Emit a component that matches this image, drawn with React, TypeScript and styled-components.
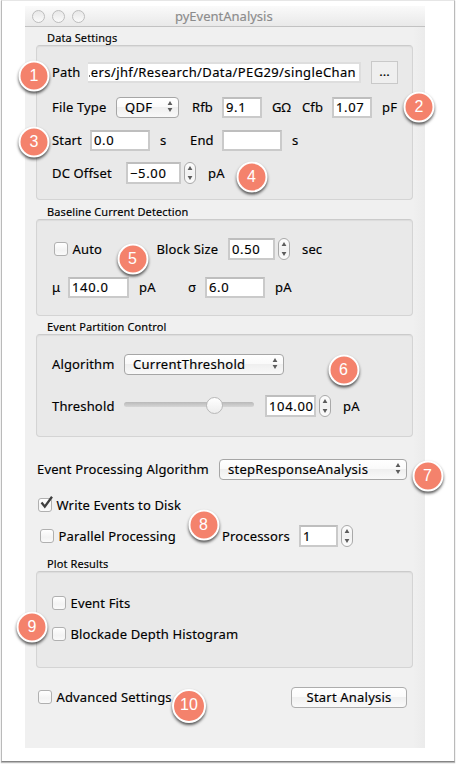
import React from 'react';
import styled, { createGlobalStyle } from 'styled-components';

const GlobalStyle = createGlobalStyle`
  *, *::before, *::after { box-sizing: border-box; }
  html, body { margin: 0; padding: 0; background: #fff; }
  body { width: 456px; height: 764px; overflow: hidden; }
`;

const Page = styled.div`
  position: relative;
  width: 456px;
  height: 764px;
  padding: 6px 0 0 25px;
  background: #fdfdfd;
  font-family: 'Noto Sans', 'Open Sans', sans-serif;
  font-size: 13px;
  line-height: 18px;
  letter-spacing: 0.15px;
  color: #000;
  -webkit-text-stroke: 0.15px currentColor;
`;

const Sheet = styled.div`
  position: absolute;
  inset: 0 1px 2px 1px;
  background: #fff;
  border: 1px solid #bababa;
  border-top-color: #e6e6e6;
  border-bottom-color: #858585;
  box-shadow: 0 1px 1px #bbb;
`;

const Window = styled.main`
  position: relative;
  display: flex;
  flex-direction: column;
  width: 400px;
  height: 742px;
  background: linear-gradient(90deg, #f0f0f0 97%, #ebebeb);
`;

const TitleBar = styled.header`
  display: flex;
  align-items: center;
  height: 21px;
  padding-left: 7px;
  background: linear-gradient(#fafafa, #e9e9e9);
  border-bottom: 1px solid #c2c2c2;
`;

const TrafficLight = styled.i`
  width: 13px;
  height: 13px;
  margin-right: 7px;
  border: 1px solid #bdbdbd;
  border-radius: 50%;
  background: linear-gradient(#e8e8e8, #fafafa);
`;

const Title = styled.h1`
  margin: 0 0 0 83px;
  font-size: 13px;
  font-weight: 400;
  letter-spacing: 0;
  line-height: 20px;
  color: #8c8c8c;
`;

const Caption = styled.h2<{ $top: number }>`
  margin: ${(p) => p.$top}px 0 0 22px;
  height: 14px;
  font-size: 11px;
  font-weight: 400;
  line-height: 14px;
  letter-spacing: 0.1px;
`;

const Group = styled.section<{ $height: number }>`
  height: ${(p) => p.$height}px;
  width: 377px;
  margin-left: 11px;
  padding: 1px 0 0 15px;
  background: #e9e9e9;
  border: 1px solid #d4d4d4;
  border-top-color: #cbcbcb;
  border-radius: 4px;
  box-shadow: inset 0 1px 1px #dcdcdc;
`;

const Row = styled.div<{ $top: number; $left?: number }>`
  display: flex;
  align-items: center;
  height: 22px;
  margin-top: ${(p) => p.$top}px;
  margin-left: ${(p) => p.$left ?? 0}px;
`;

const Label = styled.span<{ $width?: number }>`
  flex: none;
  width: ${(p) => (p.$width ? `${p.$width}px` : 'auto')};
  white-space: nowrap;
`;

const Field = styled.span<{ $width: number; $after: number; $tall?: boolean }>`
  display: flex;
  align-items: center;
  flex: none;
  width: ${(p) => p.$width}px;
  height: ${(p) => (p.$tall ? 22 : 21)}px;
  margin-right: ${(p) => p.$after}px;
  padding-left: 2px;
  background: #fff;
  border: 2px solid #cacaca;
  border-top-color: #bebebe;
  letter-spacing: 0.65px;
  white-space: nowrap;
`;

const PathField = styled(Field)`
  justify-content: flex-end;
  padding: 0 3px 0 0;
  border-left: 0;
  border-color: #dedede;
  overflow: hidden;
  letter-spacing: 0.38px;
`;

const ClippedMark = styled.i`
  flex: none;
  width: 1px;
  height: 2px;
  margin: 8px 1px 0 0;
  background: #777;
`;

const BrowseButton = styled.button`
  width: 27px;
  height: 23px;
  padding: 0 0 3px;
  border: 1px solid #c9c9c9;
  background: #efefef;
  font: inherit;
  color: #000;
`;

const PushButton = styled.button`
  width: 116px;
  height: 21px;
  padding: 0;
  border: 1px solid #adadad;
  border-radius: 4px;
  background: linear-gradient(#fff 0%, #fbfbfb 45%, #f0f0f0 50%, #fafafa);
  font: inherit;
  line-height: 18px;
  letter-spacing: 0.2px;
  -webkit-text-stroke: inherit;
  color: #000;
`;

const Popup = styled.span<{ $width: number; $after?: number }>`
  display: flex;
  align-items: center;
  justify-content: space-between;
  flex: none;
  width: ${(p) => p.$width}px;
  height: 21px;
  margin-right: ${(p) => p.$after ?? 0}px;
  padding: 0 5px 1px 8px;
  border: 1px solid #a6a6a6;
  border-radius: 4px;
  background: linear-gradient(#fff 0%, #fafafa 45%, #efefef 50%, #f9f9f9);
  letter-spacing: 0.27px;
`;

const SpinBody = styled.span<{ $after: number }>`
  display: flex;
  align-items: center;
  justify-content: center;
  flex: none;
  width: 12px;
  height: 22px;
  margin-right: ${(p) => p.$after}px;
  border: 1px solid #a9a9a9;
  border-radius: 6px;
  background: linear-gradient(#fdfdfd, #f1f1f1 50%, #fcfcfc);
`;

const CheckBody = styled.span`
  display: flex;
  flex: none;
  width: 14px;
  height: 14px;
  margin: -1px 4.5px 0 0;
  border: 1px solid #b0b0b0;
  border-radius: 3px;
  background: linear-gradient(#fff, #f3f3f3 60%, #fafafa);

  svg { flex: none; margin: -3px 0 0 1px; overflow: visible; }
`;

const SliderTrack = styled.span`
  display: flex;
  align-items: center;
  flex: none;
  width: 130px;
  height: 5px;
  margin: -3px 11px 0 0;
  padding-left: 82px;
  border-radius: 3px;
  background: linear-gradient(#b9b9b9, #d6d6d6);
`;

const SliderThumb = styled.i`
  flex: none;
  width: 17px;
  height: 17px;
  margin-top: 2px;
  border: 1px solid #b8b8b8;
  border-radius: 50%;
  background: linear-gradient(#fff, #ededed);
`;

const Badge = styled.b<{ $x: number; $y: number; $size?: number }>`
  position: absolute;
  left: ${(p) => p.$x}px;
  top: ${(p) => p.$y}px;
  display: flex;
  align-items: center;
  justify-content: center;
  width: ${(p) => p.$size ?? 31}px;
  height: ${(p) => p.$size ?? 31}px;
  padding-bottom: 1px;
  transform: translate(-50%, -50%);
  border: 2px solid #fff;
  border-radius: 50%;
  background: #f4826c;
  box-shadow: 0 2px 3px rgba(0, 0, 0, 0.65);
  color: #fff;
  font: 400 16px 'Liberation Sans', Arial, sans-serif;
  letter-spacing: 0;
  -webkit-text-stroke: 0;
`;

const Arrows = ({ gap = 3 }: { gap?: number }) => (
  <svg width="6" height={8 + gap} viewBox={`0 0 6 ${8 + gap}`} fill="#5c5c5c">
    <path d="M3 0 5.4 4H.6Z" />
    <path d={`M.6 ${4 + gap}H5.4L3 ${8 + gap}Z`} />
  </svg>
);

const Spinner = ({ after }: { after: number }) => (
  <SpinBody $after={after}>
    <Arrows gap={6} />
  </SpinBody>
);

const Check = ({ on }: { on?: boolean }) => (
  <CheckBody>
    {on && (
      <svg width="14" height="13" viewBox="0 0 14 13" fill="none" stroke="#3f3f3f" strokeWidth="2.3">
        <path d="M1.5 6.5 4.8 10.6 12 .8" />
      </svg>
    )}
  </CheckBody>
);

const badges: { x: number; y: number; size?: number }[] = [
  { x: 34, y: 76 },
  { x: 419, y: 107 },
  { x: 34, y: 142 },
  { x: 251.5, y: 177 },
  { x: 132.5, y: 258.5 },
  { x: 343.5, y: 369.5 },
  { x: 427.5, y: 475.5 },
  { x: 203.5, y: 524.5 },
  { x: 32, y: 627 },
  { x: 189, y: 705.5, size: 34 },
];

export default function App() {
  return (
    <Page>
      <GlobalStyle />
      <Sheet />
      <Window>
        <TitleBar>
          <TrafficLight />
          <TrafficLight />
          <TrafficLight />
          <Title>pyEventAnalysis</Title>
        </TitleBar>

        <Caption $top={4}>Data Settings</Caption>
        <Group $height={155}>
          <Row $top={14}>
            <Label $width={36}>Path</Label>
            <PathField $width={273} $after={10}>
              <ClippedMark />
              ers/jhf/Research/Data/PEG29/singleChan
            </PathField>
            <BrowseButton>...</BrowseButton>
          </Row>
          <Row $top={13}>
            <Label $width={64}>File Type</Label>
            <Popup $width={63} $after={13}>
              QDF
              <Arrows />
            </Popup>
            <Label $width={30}>Rfb</Label>
            <Field $width={40} $after={10}>9.1</Field>
            <Label $width={30}>GΩ</Label>
            <Label $width={30}>Cfb</Label>
            <Field $width={40} $after={10}>1.07</Field>
            <Label>pF</Label>
          </Row>
          <Row $top={11}>
            <Label $width={38}>Start</Label>
            <Field $width={60} $after={10}>0.0</Field>
            <Label $width={30}>s</Label>
            <Label $width={32}>End</Label>
            <Field $width={60} $after={10} />
            <Label>s</Label>
          </Row>
          <Row $top={11}>
            <Label $width={74}>DC Offset</Label>
            <Field $width={55} $after={3} $tall>−5.00</Field>
            <Spinner after={12} />
            <Label>pA</Label>
          </Row>
        </Group>

        <Caption $top={5}>Baseline Current Detection</Caption>
        <Group $height={97}>
          <Row $top={17} $left={2}>
            <Check />
            <Label $width={84}>Auto</Label>
            <Label $width={71.5}>Block Size</Label>
            <Field $width={47} $after={3} $tall>0.50</Field>
            <Spinner after={12} />
            <Label>sec</Label>
          </Row>
          <Row $top={16}>
            <Label $width={16}>μ</Label>
            <Field $width={61} $after={10}>140.0</Field>
            <Label $width={49}>pA</Label>
            <Label $width={17}>σ</Label>
            <Field $width={60} $after={10}>6.0</Field>
            <Label>pA</Label>
          </Row>
        </Group>

        <Caption $top={4}>Event Partition Control</Caption>
        <Group $height={103}>
          <Row $top={17}>
            <Label $width={72}>Algorithm</Label>
            <Popup $width={160}>
              CurrentThreshold
              <Arrows />
            </Popup>
          </Row>
          <Row $top={20}>
            <Label $width={72}>Threshold</Label>
            <SliderTrack>
              <SliderThumb />
            </SliderTrack>
            <Field $width={51} $after={3} $tall>104.00</Field>
            <Spinner after={12} />
            <Label>pA</Label>
          </Row>
        </Group>

        <Row $top={21} $left={12}>
          <Label $width={182}>Event Processing Algorithm</Label>
          <Popup $width={188}>
            stepResponseAnalysis
            <Arrows />
          </Popup>
        </Row>
        <Row $top={14} $left={13}>
          <Check on />
          <Label>Write Events to Disk</Label>
        </Row>
        <Row $top={9} $left={15}>
          <Check />
          <Label $width={163.5}>Parallel Processing</Label>
          <Label $width={77}>Processors</Label>
          <Field $width={39} $after={3} $tall>1</Field>
          <Spinner after={0} />
        </Row>

        <Caption $top={10}>Plot Results</Caption>
        <Group $height={97}>
          <Row $top={19}>
            <Check />
            <Label>Event Fits</Label>
          </Row>
          <Row $top={9}>
            <Check />
            <Label>Blockade Depth Histogram</Label>
          </Row>
        </Group>

        <Row $top={18} $left={13}>
          <Check />
          <Label $width={234.5}>Advanced Settings</Label>
          <PushButton>Start Analysis</PushButton>
        </Row>
      </Window>
      {badges.map((badge, index) => (
        <Badge key={index} $x={badge.x} $y={badge.y} $size={badge.size}>
          {index + 1}
        </Badge>
      ))}
    </Page>
  );
}
